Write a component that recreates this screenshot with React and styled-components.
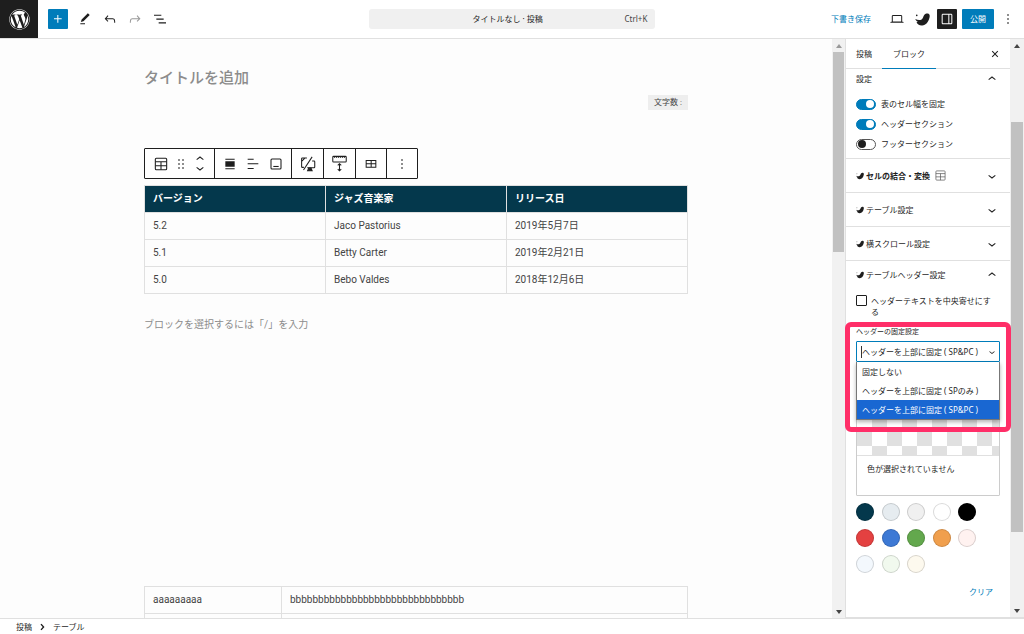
import React, { useState } from "react";
import styled, { createGlobalStyle, css } from "styled-components";
import { FaWordpress } from "react-icons/fa";

const GlobalStyle = createGlobalStyle`
  *, *::before, *::after { box-sizing: border-box; }
  body { margin: 0; background: #fff; }
  body, button, input, select {
    font-family: "Noto Sans", "Noto Sans CJK JP", sans-serif;
    font-size: 8px;
    line-height: 12px;
    color: #1e1e1e;
  }
  button { border: 0; padding: 0; background: none; }
`;

const Page = styled.div`
  display: flex;
  flex-direction: column;
  height: 100vh;
  overflow: hidden;
`;

/* ---------- icons ---------- */

const paths = {
  plus: "M11 12.5V17.5H12.5V12.5H17.5V11H12.5V6H11V11H6V12.5H11Z",
  edit: "M20.1 5.1L16.9 2 6.2 12.7l-1.3 4.4 4.5-1.3L20.1 5.1zM4 20.8h8v-1.5H4v1.5z",
  undo: "M18.3 11.7c-.6-.6-1.4-.9-2.3-.9H6.7l2.9-3.3-1.1-1-4.5 5L8.5 16l1-1-2.7-2.7H16c.5 0 .9.2 1.3.5 1 1 1 3.4 1 4.5v.3h1.5v-.2c0-1.5 0-4.3-1.5-5.7z",
  redo: "M15.6 6.5l-1.1 1 2.9 3.3H8c-.9 0-1.7.3-2.3.9-1.4 1.5-1.4 4.2-1.4 5.6v.2h1.5v-.3c0-1.1 0-3.5 1-4.5.3-.3.7-.5 1.3-.5h9.2L14.5 15l1.1 1.1 4.6-4.6-4.6-5z",
  list: "M3 5.5h11V7.3H3V5.5Zm3.5 5.7h11V13h-11v-1.8ZM21 17H10v1.8h11V17Z",
  laptop: "M20.5 16h-.7V8c0-1.1-.9-2-2-2H6.2c-1.1 0-2 .9-2 2v8h-.7c-.8 0-1.5.7-1.5 1.5h20c0-.8-.7-1.5-1.5-1.5zM5.7 8c0-.3.2-.5.5-.5h11.6c.3 0 .5.2.5.5v7.6H5.7V8z",
  drawer: "M18 4H6c-1.1 0-2 .9-2 2v12c0 1.1.9 2 2 2h12c1.1 0 2-.9 2-2V6c0-1.1-.9-2-2-2zm-4 14.5H6c-.3 0-.5-.2-.5-.5V6c0-.3.2-.5.5-.5h8v13zm4.5-.5c0 .3-.2.5-.5.5h-2.5v-13H18c.3 0 .5.2.5.5v12z",
  more: "M13 19h-2v-2h2v2zm0-6h-2v-2h2v2zm0-6h-2V5h2v2z",
  down: "M17.5 11.6L12 16l-5.5-4.4.9-1.2L12 14l4.5-3.6 1 1.2z",
  up: "M6.5 12.4L12 8l5.5 4.4-.9 1.2L12 10l-4.5 3.6-1-1.2z",
  close: "M12 13.06l3.712 3.713 1.061-1.06L13.061 12l3.712-3.712-1.06-1.06L12 10.938 8.288 7.227l-1.061 1.06L10.939 12l-3.712 3.712 1.06 1.061L12 13.061z",
  drag: "M8 7h2V5H8v2zm0 6h2v-2H8v2zm0 6h2v-2H8v2zm6-14v2h2V5h-2zm0 8h2v-2h-2v2zm0 6h2v-2h-2v2z",
  alignNone: "M19 5.5H5V4h14v1.5ZM19 20H5v-1.5h14V20ZM5 8h14v8H5V8Z",
  alignText: "M13 5.5H4V4h9v1.5Zm7 7H4V11h16v1.5Zm-7 7H4V18h9v1.5Z",
  tableEdit: "M4 6v11.5h16V6H4zm1.5 1.5h6V11h-6V7.5zm0 8.5v-3.5h6V16h-6zm13 0H13v-3.5h5.5V16zM13 11V7.5h5.5V11H13z",
  bird: "M1.500 5.500a1.300 1.300 0 1 0 2.600 0 1.300 1.300 0 1 0-2.600 0ZM.500 11c3 1.800 6.500 2.300 9.500 1.200C13 11 13 7 15 4.500 16.800 2.300 20 1.500 22.200 3c1.800 1.300 1.500 4 .8 6.500C21.500 16 17.500 21 11.500 21.500 7 21.800 3.500 19.500 2.500 16c1 .2 1.800.2 2.500 0C2.800 15 1.200 13.200.500 11Z",
};

const Svg = styled.svg`
  display: block;
  flex: none;
  fill: currentColor;
`;

const Icon = ({ name, size = 16 }) => (
  <Svg viewBox="0 0 24 24" width={size} height={size} aria-hidden="true">
    <path d={paths[name]} />
  </Svg>
);

const LineSvg = styled(Svg)`
  fill: none;
  stroke: currentColor;
  stroke-width: ${(p) => p.$w || 1.6};
`;

const BlockTable = ({ size = 16, w }) => (
  <LineSvg viewBox="0 0 24 24" width={size} height={size} $w={w} aria-hidden="true">
    <rect x="3.500" y="3.500" width="17" height="17" rx="1.500" />
    <path d="M3.500 8.500h17M3.500 14.500h17M12 8.500v12" />
  </LineSvg>
);

const Caption = () => (
  <LineSvg viewBox="0 0 24 24" width="16" height="16" aria-hidden="true">
    <rect x="4.500" y="4.500" width="15" height="15" rx="1.500" />
    <path d="M8 15.700h8" />
  </LineSvg>
);

const Devices = () => (
  <LineSvg viewBox="0 0 24 24" width="18" height="18" $w={1.4} aria-hidden="true">
    <path d="M10.500 4H4.500Q3.500 4 3.500 5V15.500Q3.500 16.500 4.500 16.500H6.500M17.500 8H20Q21 8 21 9V16Q21 17 20 17H11M3.500 8.500l4-4M17.500 2.500 6 20" />
    <path d="M13 17.500h3l1.500 3.500h-6z" fill="currentColor" />
  </LineSvg>
);

const StickyHead = () => (
  <LineSvg viewBox="0 0 24 24" width="19" height="19" $w={1.3} aria-hidden="true">
    <rect x="3.500" y="3" width="17" height="7" rx="1" />
    <path d="M5 4h14" strokeDasharray="1.500 1" />
    <path d="M12 12.500v8.500M9.800 14.500l2.200-2.200 2.200 2.200M9.800 19l2.200 2.200 2.200-2.200" />
  </LineSvg>
);

/* ---------- top bar ---------- */

const TopBar = styled.header`
  display: grid;
  grid-template-columns: 1fr 28% 1fr;
  align-items: center;
  height: 39px;
  flex: none;
  border-bottom: 1px solid #e0e0e0;
`;

const TopLeft = styled.div`
  display: flex;
  align-items: center;
`;

const TopRight = styled.div`
  display: flex;
  align-items: center;
  justify-content: flex-end;
  padding-right: 7px;
`;

const SiteLink = styled.a`
  display: grid;
  place-items: center;
  width: 38px;
  height: 38px;
  margin-right: 10px;
  background: #1e1e1e;
  color: #fff;
`;

const ToolButton = styled.button`
  display: grid;
  place-items: center;
  flex: none;
  width: ${(p) => p.$width || 20}px;
  height: 20px;
  border-radius: 1px;
  ${(p) => p.$tone === "primary" && css`background: #007cba; color: #fff;`}
  ${(p) => p.$tone === "dark" && css`background: #1e1e1e; color: #fff;`}
  &:disabled { color: #999; }
`;

const Tools = styled.div`
  display: flex;
  gap: 5px;
  padding-left: 7px;
`;

const DocumentButton = styled.button`
  display: flex;
  align-items: center;
  height: 20px;
  padding: 0 8px;
  border-radius: 3px;
  background: #f0f0f0;
`;

const DocumentTitle = styled.span`
  flex: 1;
  padding-left: 14px;
`;

const Shortcut = styled.span`
  color: #444;
`;

const DraftButton = styled.button`
  margin-right: 16px;
  color: #007cba;
`;

const RightTools = styled.div`
  display: flex;
  align-items: center;
  gap: 5px;
`;

/* ---------- workspace ---------- */

const Workspace = styled.div`
  display: flex;
  flex: 1;
  min-height: 0;
`;

const CanvasPane = styled.main`
  display: flex;
  flex: 1;
  min-width: 0;
  background: #fdfdfd;
`;

const Canvas = styled.div`
  flex: 1;
  min-width: 0;
  overflow: hidden;
`;

const Post = styled.article`
  max-width: 544px;
  margin: 0 auto;
  padding-top: 27px;
  font-family: Roboto, "Noto Sans CJK JP", sans-serif;
  font-size: 10px;
  color: #444;
`;

const PostTitle = styled.h1`
  margin: 0;
  font-size: 15px;
  line-height: 24px;
  font-weight: 500;
  color: #8c8c8c;
`;

const WordCount = styled.div`
  width: fit-content;
  margin: 5px 0 38px auto;
  padding: 0 6px;
  background: #eee;
  font-size: 8px;
  line-height: 15px;
`;

const BlockToolbar = styled.div`
  display: flex;
  width: fit-content;
  height: 31px;
  margin-bottom: 6px;
  border: 1px solid #1e1e1e;
  border-radius: 1px;
  background: #fff;
  color: #1e1e1e;
`;

const ToolGroup = styled.div`
  display: flex;
  align-items: center;
  padding: 0 ${(p) => p.$pad || 5}px;
  gap: ${(p) => p.$gap || 0}px;
  & + & { border-left: 1px solid #1e1e1e; }
`;

const Movers = styled.div`
  display: flex;
  flex-direction: column;
`;

const Mover = styled.button`
  display: flex;
  align-items: center;
  justify-content: center;
  width: 17px;
  height: 9px;
`;

const Table = styled.table`
  width: 100%;
  border-collapse: collapse;
  table-layout: fixed;
  font-size: 10px;
  line-height: 16px;
  th, td {
    height: 27px;
    padding: 0 8px;
    border: 1px solid #e0e0e0;
    text-align: left;
  }
  th {
    background: #04384c;
    color: #fff;
    font-weight: 700;
  }
`;

const NarrowCol = styled.col`
  width: 137px;
`;

const Prompt = styled.p`
  margin: 23px 0 253px;
  line-height: 16px;
  color: #8c8c8c;
`;

/* ---------- scroll bar ---------- */

const Track = styled.div`
  display: flex;
  flex-direction: column;
  flex: none;
  width: ${(p) => p.$width}px;
  padding: 0 1px;
  background: #f1f1f1;
`;

const Thumb = styled.div`
  flex: ${(p) => p.$share} 0 0;
  background: #c1c1c1;
`;

const Space = styled.div`
  flex: ${(p) => p.$share} 0 0;
`;

const Arrow = styled.div`
  display: grid;
  place-items: center;
  height: 13px;
  color: ${(p) => (p.$dim ? "#999" : "#444")};
`;

const Scrollbar = ({ before, size, after, dim, width = 13 }) => (
  <Track $width={width} aria-hidden="true">
    <Arrow $dim={dim}>
      <Svg width="6" height="4" viewBox="0 0 6 4"><path d="M0 4 3 0l3 4z" /></Svg>
    </Arrow>
    <Space $share={before} />
    <Thumb $share={size} />
    <Space $share={after} />
    <Arrow>
      <Svg width="6" height="4" viewBox="0 0 6 4"><path d="M0 0h6L3 4z" /></Svg>
    </Arrow>
  </Track>
);

/* ---------- settings sidebar ---------- */

const Sidebar = styled.aside`
  display: flex;
  flex: none;
  width: 179px;
  border-left: 1px solid #e0e0e0;
  border-bottom: 1px solid #e0e0e0;
`;

const SidebarBody = styled.div`
  flex: 1;
  min-width: 0;
`;

const Tabs = styled.div`
  display: flex;
  align-items: stretch;
  height: 30px;
  border-bottom: 1px solid #e0e0e0;
`;

const Tab = styled.button`
  padding: 0 10px;
  ${(p) => p.$active && css`padding: 0 11px; box-shadow: 0 1px 0 #007cba;`}
`;

const CloseButton = styled(ToolButton)`
  align-self: center;
  margin: 0 5px 0 auto;
`;

const Panel = styled.section`
  padding: 0 10px;
  border-bottom: 1px solid #e0e0e0;
  &:last-child { border-bottom: 0; }
`;

const PanelTitle = styled.button`
  display: flex;
  align-items: center;
  gap: 2px;
  width: 100%;
  height: ${(p) => p.$height || 33}px;
  font-weight: ${(p) => (p.$strong ? 700 : 400)};
`;

const PanelChevron = styled.span`
  margin-left: auto;
`;

const TitleIcon = styled.span`
  margin-left: 2px;
  color: #555;
`;

const ToggleList = styled.div`
  padding: 6px 0 4px;
`;

const ToggleRow = styled.label`
  display: flex;
  align-items: center;
  gap: 5px;
  height: 20px;
`;

const Toggle = styled.input`
  appearance: none;
  display: flex;
  align-items: center;
  width: 20px;
  height: 11px;
  margin: 0;
  padding: 1px;
  border: 1px solid #555;
  border-radius: 6px;
  background: #fff;
  &::before {
    content: "";
    width: 8px;
    height: 8px;
    border-radius: 50%;
    background: #1e1e1e;
  }
  &:checked {
    justify-content: flex-end;
    border-color: #007cba;
    background: #007cba;
  }
  &:checked::before { background: #fff; }
`;

const CheckRow = styled.label`
  display: flex;
  gap: 4px;
  padding: 6px 4px 10px 0;
  line-height: 11px;
`;

const Check = styled.input`
  appearance: none;
  flex: none;
  width: 11px;
  height: 11px;
  margin: 0;
  border: 1px solid #1e1e1e;
  border-radius: 1px;
  background: #fff;
`;

const Field = styled.div`
  position: relative;
`;

const FieldLabel = styled.label`
  display: block;
  margin-bottom: 4px;
  font-size: 7px;
  line-height: 10px;
`;

const SelectBox = styled.div`
  position: relative;
  display: flex;
  align-items: center;
`;

const Select = styled.select`
  appearance: none;
  width: 100%;
  height: 21px;
  padding: 0 16px 0 5px;
  border: 1px solid #007cba;
  border-radius: 1px;
  background: #fff;
  outline: 0;
`;

const SelectArrow = styled.span`
  position: absolute;
  right: 2px;
  pointer-events: none;
`;

const Cursor = styled.span`
  position: absolute;
  left: 5px;
  width: 1px;
  height: 12px;
  background: #333;
`;

const Menu = styled.ul`
  position: absolute;
  z-index: 1;
  top: 100%;
  left: 0;
  right: 0;
  margin: 0;
  padding: 0;
  border: 1px solid #777;
  border-top-width: 0;
  background: #fff;
  list-style: none;
  box-shadow: 0 2px 4px rgba(0, 0, 0, 0.3);
`;

const MenuItem = styled.li`
  padding: 0 5px;
  line-height: 19px;
  ${(p) => p.$selected && css`background: #1967d2; color: #fff;`}
`;

const Highlight = styled.div`
  position: absolute;
  z-index: 2;
  inset: -5px -11px -70px;
  border: 5px solid #ff2e68;
  border-radius: 6px;
  pointer-events: none;
`;

const ColorPreview = styled.div`
  margin: 23px 0 7px;
  border: 1px solid #ccc;
  border-radius: 1px;
`;

const Checker = styled.div`
  height: 70px;
  border-bottom: 1px solid #e0e0e0;
  background: repeating-conic-gradient(#e0e0e0 0 25%, #fff 0 50%) 0 0 / 30px 30px;
`;

const PreviewText = styled.p`
  margin: 0;
  padding: 7px 10px 20px;
`;

const Swatches = styled.div`
  display: grid;
  grid-template-columns: repeat(5, 18px);
  justify-content: space-between;
  row-gap: 8px;
  width: 120px;
`;

const Swatch = styled.button`
  width: 18px;
  height: 18px;
  border-radius: 50%;
  background: ${(p) => p.$color};
  box-shadow: inset 0 0 0 1px rgba(0, 0, 0, 0.15);
`;

const ClearButton = styled.button`
  display: block;
  margin: 13px 7px 0 auto;
  color: #007cba;
`;

/* ---------- footer ---------- */

const Footer = styled.nav`
  display: flex;
  align-items: center;
  gap: 4px;
  flex: none;
  height: 16px;
  padding: 0 16px;
  border-top: 1px solid #e0e0e0;
`;

const artists = [
  ["5.2", "Jaco Pastorius", "2019年5月7日"],
  ["5.1", "Betty Carter", "2019年2月21日"],
  ["5.0", "Bebo Valdes", "2018年12月6日"],
];

const colors = [
  ["濃紺", "#04384c"], ["薄青灰", "#e6ecf0"], ["薄灰", "#f0f0f0"], ["白", "#fff"], ["黒", "#000"],
  ["赤", "#e44141"], ["青", "#3d79d5"], ["緑", "#63a84d"], ["橙", "#f09f4d"], ["薄赤", "#fff2f0"],
  ["薄青", "#f3f8fd"], ["薄緑", "#f1f9ee"], ["薄橙", "#fdf9ee"],
];

const fixOptions = [
  "固定しない",
  "ヘッダーを上部に固定 ( SPのみ )",
  "ヘッダーを上部に固定 ( SP&PC )",
];

const CollapsedPanel = ({ title, strong, icon }) => (
  <Panel>
    <PanelTitle $strong={strong} aria-expanded="false">
      <Icon name="bird" size={8} />
      <span>{title}</span>
      {icon && <TitleIcon>{icon}</TitleIcon>}
      <PanelChevron><Icon name="down" /></PanelChevron>
    </PanelTitle>
  </Panel>
);

export default function App() {
  const [toggles, setToggles] = useState([true, true, false]);
  const [fix, setFix] = useState(fixOptions[2]);
  const flip = (i) => setToggles((t) => t.map((v, j) => (i === j ? !v : v)));

  return (
    <>
      <GlobalStyle />
      <Page lang="ja">
        <TopBar>
          <TopLeft>
            <SiteLink href="#" aria-label="投稿一覧"><FaWordpress size={21} /></SiteLink>
            <ToolButton $tone="primary" aria-label="ブロックを追加"><Icon name="plus" /></ToolButton>
            <Tools>
              <ToolButton aria-label="ツール"><Icon name="edit" size={14} /></ToolButton>
              <ToolButton aria-label="元に戻す"><Icon name="undo" /></ToolButton>
              <ToolButton aria-label="やり直す" disabled><Icon name="redo" /></ToolButton>
              <ToolButton aria-label="リスト表示"><Icon name="list" /></ToolButton>
            </Tools>
          </TopLeft>
          <DocumentButton>
            <DocumentTitle>タイトルなし · 投稿</DocumentTitle>
            <Shortcut>Ctrl+K</Shortcut>
          </DocumentButton>
          <TopRight>
            <DraftButton>下書き保存</DraftButton>
            <RightTools>
              <ToolButton aria-label="表示"><Icon name="laptop" /></ToolButton>
              <ToolButton aria-label="テーマ設定"><Icon name="bird" size={15} /></ToolButton>
              <ToolButton $tone="dark" aria-label="設定"><Icon name="drawer" /></ToolButton>
              <ToolButton $tone="primary" $width={32}>公開</ToolButton>
              <ToolButton $width={18} aria-label="オプション"><Icon name="more" /></ToolButton>
            </RightTools>
          </TopRight>
        </TopBar>

        <Workspace>
          <CanvasPane>
            <Canvas>
              <Post>
                <PostTitle>タイトルを追加</PostTitle>
                <WordCount>文字数 :</WordCount>
                <BlockToolbar role="toolbar">
                  <ToolGroup $pad={6} $gap={2}>
                    <ToolButton aria-label="テーブル"><BlockTable /></ToolButton>
                    <ToolButton $width={16} aria-label="ドラッグ"><Icon name="drag" /></ToolButton>
                    <Movers>
                      <Mover aria-label="上に移動"><Icon name="up" /></Mover>
                      <Mover aria-label="下に移動"><Icon name="down" /></Mover>
                    </Movers>
                  </ToolGroup>
                  <ToolGroup $gap={3}>
                    <ToolButton aria-label="配置"><Icon name="alignNone" /></ToolButton>
                    <ToolButton aria-label="文字の配置"><Icon name="alignText" /></ToolButton>
                    <ToolButton aria-label="キャプション"><Caption /></ToolButton>
                  </ToolGroup>
                  <ToolGroup><ToolButton $width={21} aria-label="デバイス制限"><Devices /></ToolButton></ToolGroup>
                  <ToolGroup><ToolButton $width={21} aria-label="ヘッダー固定"><StickyHead /></ToolButton></ToolGroup>
                  <ToolGroup><ToolButton aria-label="表を編集"><Icon name="tableEdit" /></ToolButton></ToolGroup>
                  <ToolGroup><ToolButton aria-label="オプション"><Icon name="more" /></ToolButton></ToolGroup>
                </BlockToolbar>
                <Table>
                  <thead>
                    <tr><th>バージョン</th><th>ジャズ音楽家</th><th>リリース日</th></tr>
                  </thead>
                  <tbody>
                    {artists.map((row) => (
                      <tr key={row[0]}>{row.map((c) => <td key={c}>{c}</td>)}</tr>
                    ))}
                  </tbody>
                </Table>
                <Prompt>ブロックを選択するには「/」を入力</Prompt>
                <Table>
                  <colgroup><NarrowCol /><col /></colgroup>
                  <tbody>
                    <tr><td>aaaaaaaaa</td><td>bbbbbbbbbbbbbbbbbbbbbbbbbbbbbbb</td></tr>
                    <tr><td /><td /></tr>
                  </tbody>
                </Table>
              </Post>
            </Canvas>
            <Scrollbar before={0} size={200} after={353} dim />
          </CanvasPane>

          <Sidebar>
            <SidebarBody>
              <Tabs>
                <Tab>投稿</Tab>
                <Tab $active>ブロック</Tab>
                <CloseButton aria-label="設定を閉じる"><Icon name="close" /></CloseButton>
              </Tabs>
              <Panel>
                <PanelTitle $height={19} aria-expanded="true">
                  <span>設定</span>
                  <PanelChevron><Icon name="up" /></PanelChevron>
                </PanelTitle>
                <ToggleList>
                  {["表のセル幅を固定", "ヘッダーセクション", "フッターセクション"].map((t, i) => (
                    <ToggleRow key={t}>
                      <Toggle type="checkbox" checked={toggles[i]} onChange={() => flip(i)} />
                      {t}
                    </ToggleRow>
                  ))}
                </ToggleList>
              </Panel>
              <CollapsedPanel title="セルの結合・変換" strong icon={<BlockTable size={13} w={1.3} />} />
              <CollapsedPanel title="テーブル設定" />
              <CollapsedPanel title="横スクロール設定" />
              <Panel>
                <PanelTitle $height={28} aria-expanded="true">
                  <Icon name="bird" size={8} />
                  <span>テーブルヘッダー設定</span>
                  <PanelChevron><Icon name="up" /></PanelChevron>
                </PanelTitle>
                <CheckRow>
                  <Check type="checkbox" />
                  <span>ヘッダーテキストを中央寄せにする</span>
                </CheckRow>
                <Field>
                  <FieldLabel htmlFor="fix">ヘッダーの固定設定</FieldLabel>
                  <SelectBox>
                    <Select id="fix" value={fix} onChange={(e) => setFix(e.target.value)}>
                      {fixOptions.map((o) => <option key={o}>{o}</option>)}
                    </Select>
                    <SelectArrow><Icon name="down" size={12} /></SelectArrow>
                    <Cursor />
                    <Menu role="listbox">
                      {fixOptions.map((o) => (
                        <MenuItem key={o} role="option" aria-selected={o === fix} $selected={o === fix} onClick={() => setFix(o)}>{o}</MenuItem>
                      ))}
                    </Menu>
                  </SelectBox>
                  <Highlight />
                </Field>
                <ColorPreview>
                  <Checker />
                  <PreviewText>色が選択されていません</PreviewText>
                </ColorPreview>
                <Swatches>
                  {colors.map(([name, c]) => <Swatch key={name} $color={c} aria-label={name} />)}
                </Swatches>
                <ClearButton>クリア</ClearButton>
              </Panel>
            </SidebarBody>
            <Scrollbar before={70} size={411} after={72} width={14} />
          </Sidebar>
        </Workspace>

        <Footer aria-label="ブロックのパンくずリスト">
          <span>投稿</span>
          <Svg width="13" height="8" viewBox="0 0 13 8" aria-hidden="true">
            <path d="M4.500 1.500 5.500.800 8.500 4 5.500 7.200 4.500 6.500 6.700 4z" />
          </Svg>
          <span>テーブル</span>
        </Footer>
      </Page>
    </>
  );
}
